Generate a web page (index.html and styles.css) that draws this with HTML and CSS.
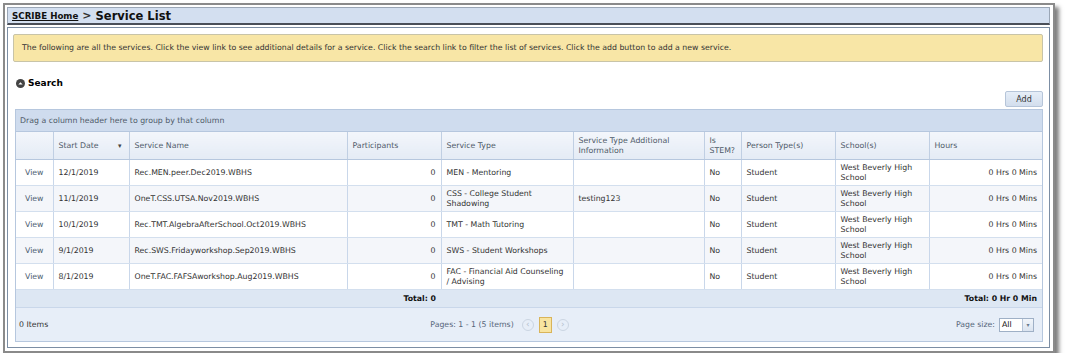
FILE: index.html
```html
<!DOCTYPE html>
<html lang="en">
<head>
    <meta charset="UTF-8">
    <title>Service List</title>
    <link rel="stylesheet" href="styles.css">
</head>
<body>
    <div class="frame">
        <div class="title-bar">
            <a href="#" class="crumb">SCRIBE Home</a>
            <span class="sep">&gt;</span>
            <span class="page-title">Service List</span>
        </div>
        <div class="content">
            <div class="info-box">
                The following are all the services. Click the view link to see additional details for a service. Click the search link to filter the list of services. Click the add button to add a new service.
            </div>

            <div class="search-toggle">
                <svg class="search-icon" width="9" height="9" viewBox="0 0 10 10">
                    <circle cx="5" cy="5" r="5" fill="#444"/>
                    <path d="M2.6 6.2 L5 3.6 L7.4 6.2 Z" fill="#fff"/>
                </svg>
                <span>Search</span>
            </div>

            <div class="toolbar">
                <button class="add-btn">Add</button>
            </div>

            <div class="grid">
                <div class="group-panel">Drag a column header here to group by that column</div>
                <table class="grid-table">
                    <colgroup>
                        <col style="width: 37px">
                        <col style="width: 76px">
                        <col style="width: 218px">
                        <col style="width: 94px">
                        <col style="width: 132px">
                        <col style="width: 131px">
                        <col style="width: 37px">
                        <col style="width: 94px">
                        <col style="width: 94px">
                        <col>
                    </colgroup>
                    <thead>
                        <tr>
                            <th></th>
                            <th><span class="sort">Start Date <span class="arrow">&#9662;</span></span></th>
                            <th>Service Name</th>
                            <th>Participants</th>
                            <th>Service Type</th>
                            <th>Service Type Additional Information</th>
                            <th>Is STEM?</th>
                            <th>Person Type(s)</th>
                            <th>School(s)</th>
                            <th>Hours</th>
                        </tr>
                    </thead>
                    <tbody>
                        <tr>
                            <td class="view"><a href="#">View</a></td>
                            <td>12/1/2019</td>
                            <td>Rec.MEN.peer.Dec2019.WBHS</td>
                            <td class="num">0</td>
                            <td>MEN - Mentoring</td>
                            <td></td>
                            <td>No</td>
                            <td>Student</td>
                            <td>West Beverly High School</td>
                            <td class="num">0 Hrs 0 Mins</td>
                        </tr>
                        <tr class="alt">
                            <td class="view"><a href="#">View</a></td>
                            <td>11/1/2019</td>
                            <td>OneT.CSS.UTSA.Nov2019.WBHS</td>
                            <td class="num">0</td>
                            <td>CSS - College Student Shadowing</td>
                            <td>testing123</td>
                            <td>No</td>
                            <td>Student</td>
                            <td>West Beverly High School</td>
                            <td class="num">0 Hrs 0 Mins</td>
                        </tr>
                        <tr>
                            <td class="view"><a href="#">View</a></td>
                            <td>10/1/2019</td>
                            <td>Rec.TMT.AlgebraAfterSchool.Oct2019.WBHS</td>
                            <td class="num">0</td>
                            <td>TMT - Math Tutoring</td>
                            <td></td>
                            <td>No</td>
                            <td>Student</td>
                            <td>West Beverly High School</td>
                            <td class="num">0 Hrs 0 Mins</td>
                        </tr>
                        <tr class="alt">
                            <td class="view"><a href="#">View</a></td>
                            <td>9/1/2019</td>
                            <td>Rec.SWS.Fridayworkshop.Sep2019.WBHS</td>
                            <td class="num">0</td>
                            <td>SWS - Student Workshops</td>
                            <td></td>
                            <td>No</td>
                            <td>Student</td>
                            <td>West Beverly High School</td>
                            <td class="num">0 Hrs 0 Mins</td>
                        </tr>
                        <tr>
                            <td class="view"><a href="#">View</a></td>
                            <td>8/1/2019</td>
                            <td>OneT.FAC.FAFSAworkshop.Aug2019.WBHS</td>
                            <td class="num">0</td>
                            <td>FAC - Financial Aid Counseling / Advising</td>
                            <td></td>
                            <td>No</td>
                            <td>Student</td>
                            <td>West Beverly High School</td>
                            <td class="num">0 Hrs 0 Mins</td>
                        </tr>
                    </tbody>
                    <tfoot>
                        <tr>
                            <td colspan="4" class="num total">Total: 0</td>
                            <td colspan="6" class="num total">Total: 0 Hr 0 Min</td>
                        </tr>
                    </tfoot>
                </table>
                <div class="pager">
                    <span class="item-count">0 Items</span>
                    <div class="pages">
                        <span>Pages: 1 - 1 (5 items)</span>
                        <span class="nav-btn">&lsaquo;</span>
                        <span class="page-num">1</span>
                        <span class="nav-btn">&rsaquo;</span>
                    </div>
                    <div class="page-size">
                        <span>Page size:</span>
                        <span class="select">
                            <span class="select-value">All</span>
                            <span class="select-arrow">&#9662;</span>
                        </span>
                    </div>
                </div>
            </div>
        </div>
    </div>
</body>
</html>
```

FILE: styles.css
```css
body {
    margin: 0;
    background-color: #fff;
    font-family: 'DejaVu Sans', Verdana, sans-serif;
    font-size: 7.8px;
    color: #333;
}

.frame {
    width: 1043px;
    margin: 3px 0 0 3px;
    border: 2px solid #8a8a8a;
    padding: 2px 3px 3px 2px;
    box-shadow: 4px 4px 4px rgba(0, 0, 0, 0.5);
}

.title-bar {
    background-color: #d3dff0;
    border: 1px solid #9aa6b6;
    border-bottom: 2px solid #4a4f58;
    height: 15px;
    padding: 0 0 0 4px;
    display: flex;
    align-items: center;
    gap: 4px;
}

.crumb {
    color: #111;
    font-size: 8.7px;
    font-weight: bold;
}

.sep {
    font-size: 11px;
    font-weight: bold;
}

.page-title {
    font-size: 11.5px;
    font-weight: bold;
    color: #111;
}

.content {
    margin-top: 2px;
    border: 1px solid #7c8ea4;
    padding: 6px 6px 5px 5px;
}

.info-box {
    background-color: #f8e6a6;
    border: 1px solid #c8c4a8;
    border-radius: 2px;
    padding: 8px 8px 9px 8px;
    color: #333;
}

.search-toggle {
    display: flex;
    align-items: center;
    gap: 3px;
    margin: 16px 0 0 3px;
    font-size: 9px;
    font-weight: bold;
    color: #000;
}

.toolbar {
    display: flex;
    justify-content: flex-end;
    margin-top: 3px;
}

.add-btn {
    font-family: 'DejaVu Sans', Verdana, sans-serif;
    font-size: 8px;
    color: #333;
    background: linear-gradient(#e6eef8, #d3deed);
    border: 1px solid #b6c5d9;
    border-radius: 2px;
    width: 38px;
    height: 16px;
    padding: 0;
}

.grid {
    margin: 2px 0 0 2px;
    border: 1px solid #b6c7de;
}

.group-panel {
    background-color: #cfdcee;
    height: 21px;
    line-height: 21px;
    padding-left: 4px;
    color: #4e5a68;
    border-bottom: 1px solid #b6c7de;
}

.grid-table {
    width: 100%;
    border-collapse: collapse;
    table-layout: fixed;
}

.grid-table th {
    background: linear-gradient(#f3f6fb, #e4ebf5);
    color: #4e5a68;
    font-weight: normal;
    text-align: left;
    height: 27px;
    padding: 0 5px;
    border-left: 1px solid #c0cfe3;
    border-bottom: 1px solid #b6c7de;
    line-height: 10px;
}

.grid-table th:first-child,
.grid-table td:first-child {
    border-left: none;
}

.sort {
    display: flex;
    justify-content: space-between;
}

.arrow {
    font-size: 7px;
    color: #444;
    padding-right: 2px;
}

.grid-table td {
    height: 25px;
    padding: 0 5px;
    border-left: 1px solid #c9d7ea;
    border-bottom: 1px solid #d3dfee;
    line-height: 10px;
    background-color: #fff;
}

.grid-table tr.alt td {
    background-color: #f4f6fa;
}

.grid-table td.view {
    text-align: center;
}

.view a {
    color: #4c5e72;
    text-decoration: none;
}

.num {
    text-align: right;
}

.grid-table tfoot td {
    background-color: #dde7f3;
    height: 17px;
    font-weight: bold;
    color: #111;
    border-left: none;
    border-bottom: 1px solid #c9d7ea;
}

.pager {
    background-color: #e7eef8;
    height: 33px;
    display: grid;
    grid-template-columns: 1fr auto 1fr;
    align-items: center;
    padding: 0 8px 0 3px;
    color: #333;
}

.pages {
    display: flex;
    align-items: center;
    gap: 5px;
    color: #56667a;
    margin-right: 54px;
}

.pages span:first-child {
    margin-right: 3px;
}

.nav-btn {
    width: 10px;
    height: 10px;
    border: 1px solid #cbd5e2;
    border-radius: 50%;
    color: #b4c0ce;
    font-size: 9px;
    line-height: 9px;
    text-align: center;
}

.page-num {
    background-color: #f8e4a0;
    border: 1px solid #d9b45a;
    width: 11px;
    height: 14px;
    line-height: 14px;
    text-align: center;
    color: #333;
}

.page-size {
    display: flex;
    align-items: center;
    justify-content: flex-end;
    gap: 4px;
    color: #56667a;
}

.select {
    display: flex;
    border: 1px solid #9fb0c6;
    background-color: #fff;
    height: 12px;
    width: 33px;
}

.select-value {
    flex: 1;
    padding-left: 2px;
    line-height: 12px;
    color: #111;
}

.select-arrow {
    width: 10px;
    background: linear-gradient(#f1f5fa, #dbe4f0);
    border-left: 1px solid #b6c5d9;
    font-size: 6px;
    line-height: 12px;
    text-align: center;
    color: #6b7b8f;
}
```
